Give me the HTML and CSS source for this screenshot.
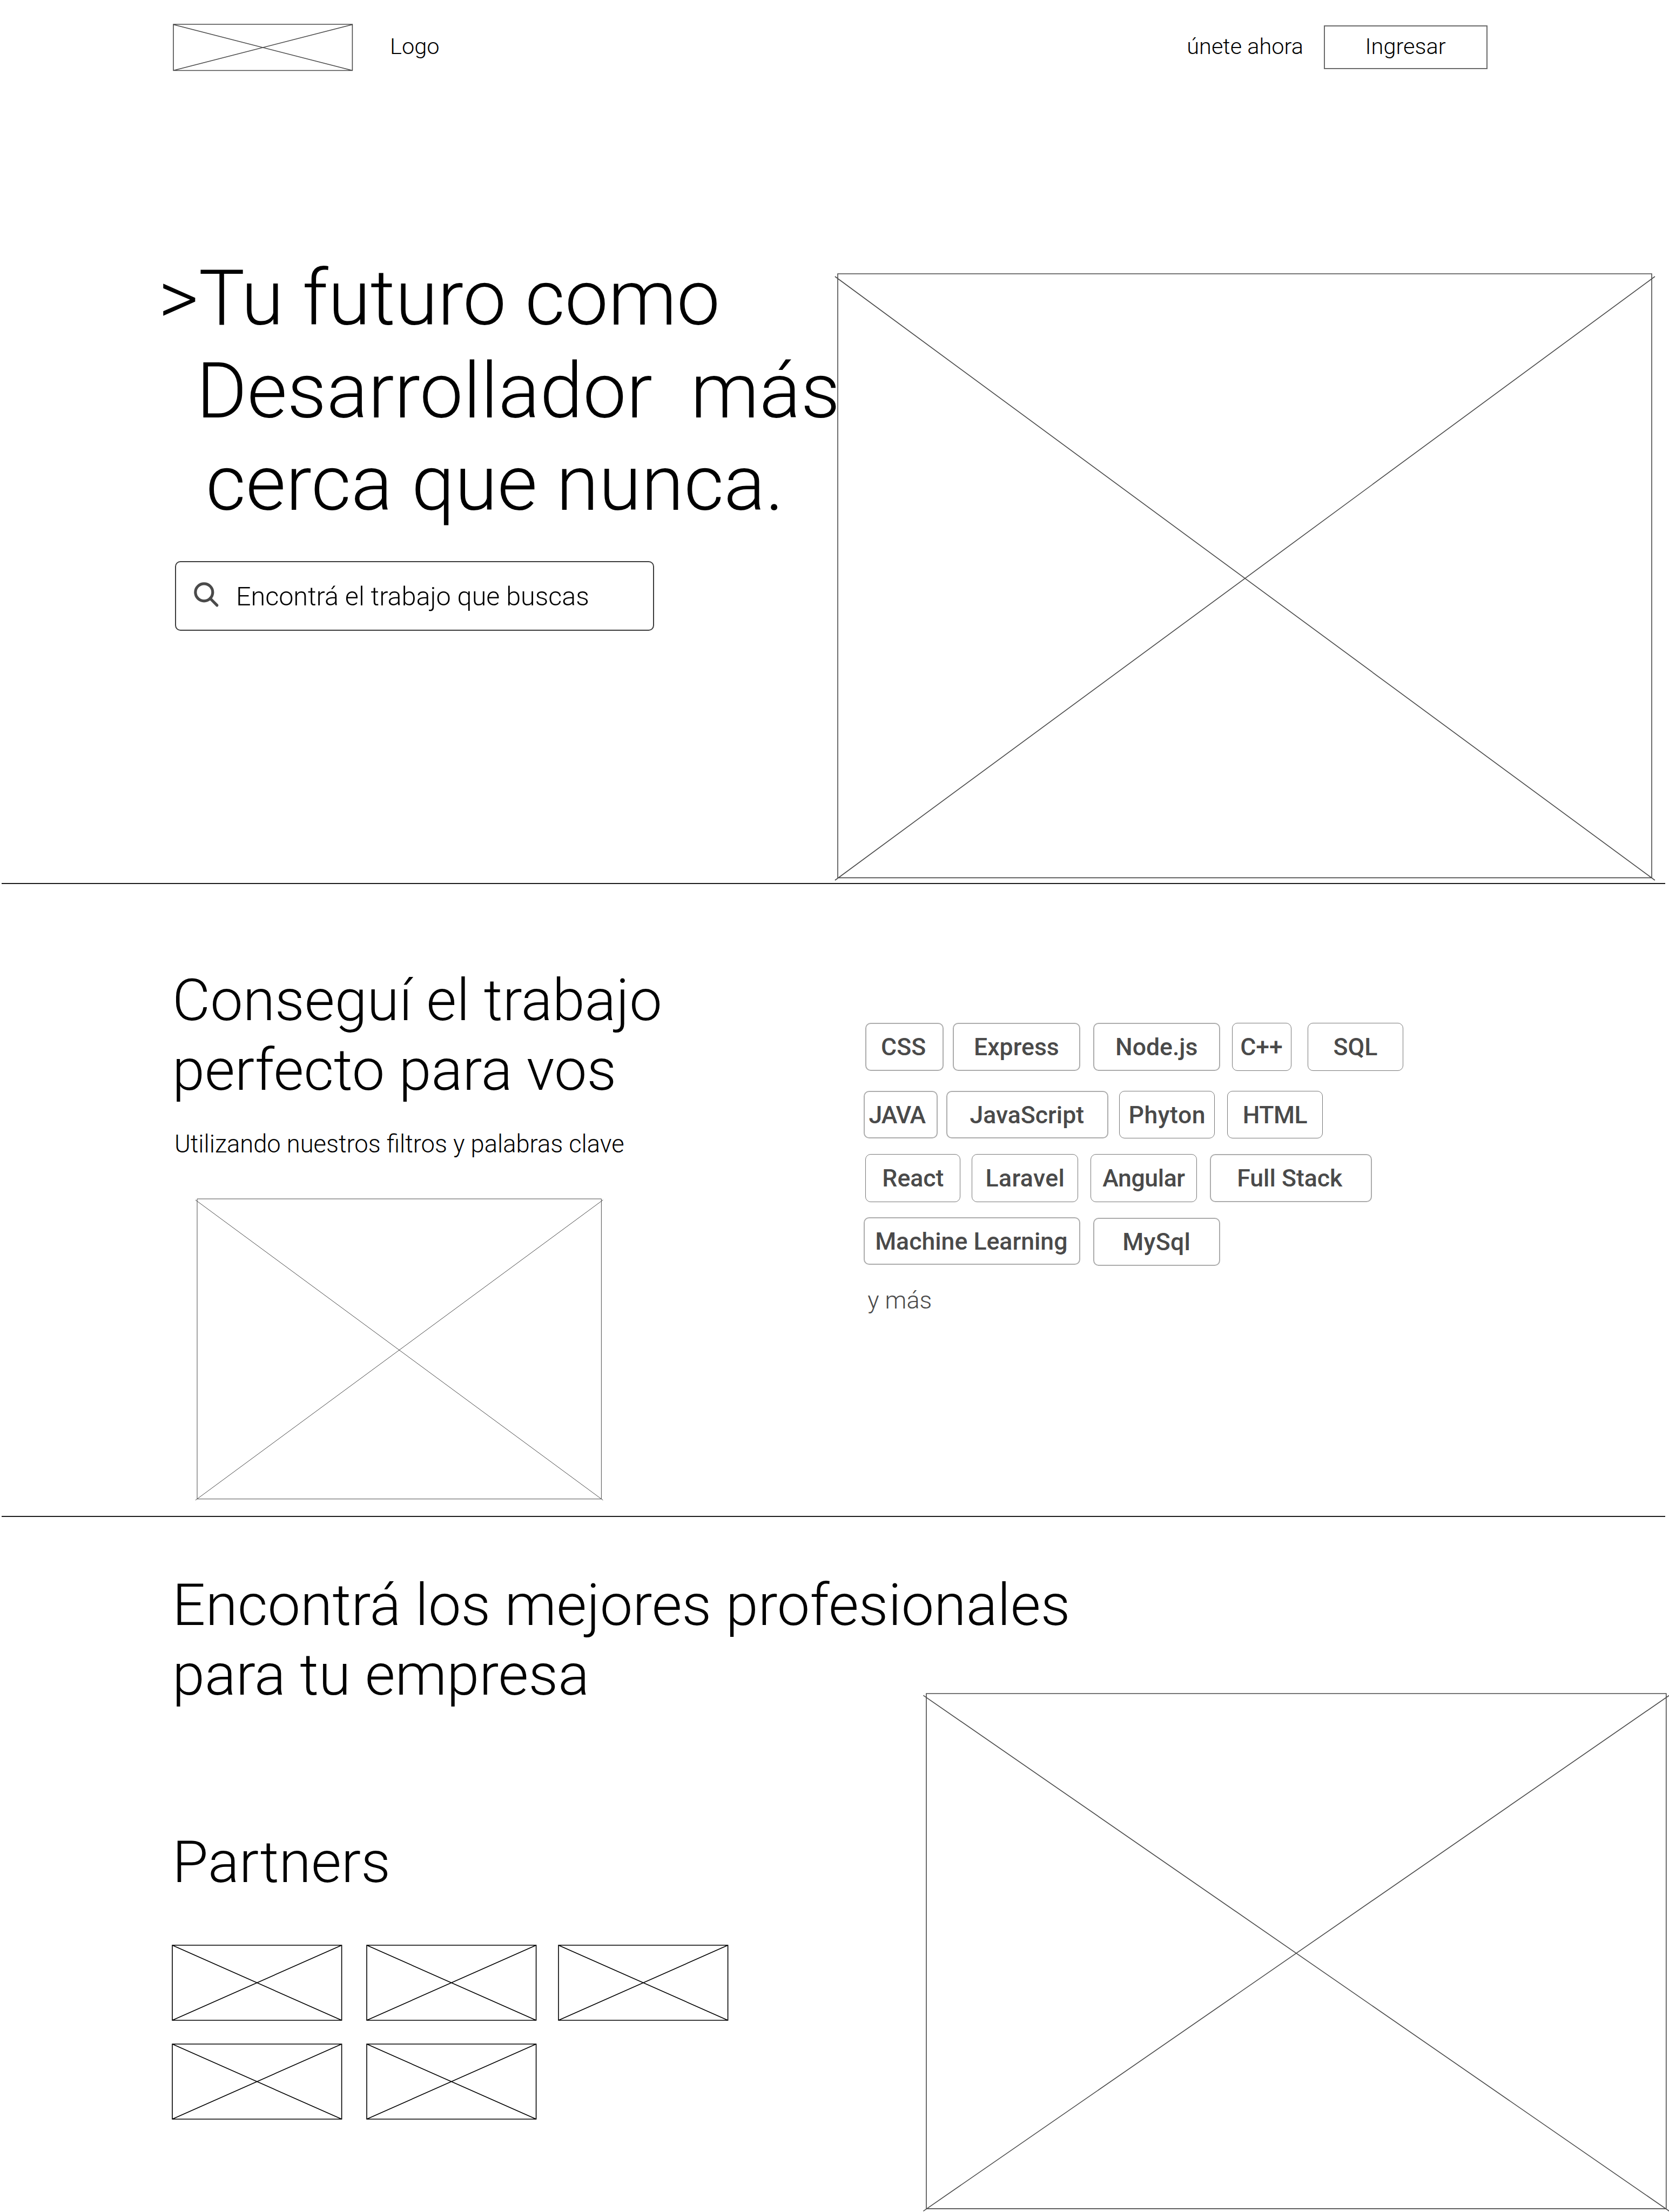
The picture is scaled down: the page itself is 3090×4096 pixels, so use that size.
FILE: index.html
```html
<!DOCTYPE html>
<html lang="es">
<head>
<meta charset="utf-8">
<title>Logo</title>
<link rel="stylesheet" href="styles.css">
</head>
<body>
<header class="header">
  <svg class="logo-frame" viewBox="0 0 331.4 85.5"><path d="M0 0H331.4V85.5H0ZM0 .5L331.4 85.5M331.4 .5L0 85.5"/></svg>
  <span class="logo-name">Logo</span>
  <nav class="nav">
    <a class="nav-link">únete ahora</a>
    <a class="nav-button"><span>Ingresar</span></a>
  </nav>
</header>

<main>
  <section class="hero">
    <div class="hero-copy">
      <h1 class="hero-title">
        <span class="hero-line hero-line-1">&gt;Tu futuro como</span>
        <span class="hero-line hero-line-2">Desarrollador&nbsp; más</span>
        <span class="hero-line hero-line-3">cerca que nunca.</span>
      </h1>
      <div class="search">
        <svg class="search-icon" viewBox="0 0 48 48"><circle cx="20.8" cy="17.8" r="16"/><path d="M32 29L44.8 41.9"/></svg>
        <span class="search-text">Encontrá el trabajo que buscas</span>
      </div>
    </div>
    <svg class="frame hero-image" viewBox="0 0 1507 1118.4"><path d="M0 0H1507V1118.4H0ZM-5.1 5L1512.9 1123M1512.9 5L-5.1 1123"/></svg>
  </section>
  <hr class="divider">

  <section class="jobs">
    <div class="jobs-copy">
      <h2 class="title">Conseguí el trabajo<br>perfecto para vos</h2>
      <p class="subtitle">Utilizando nuestros filtros y palabras clave</p>
      <svg class="frame jobs-image" viewBox="0 0 748.4 555.7"><path d="M0 0H748.4V555.7H0ZM-3.1 2L751.4 557.9M751.4 2L-3.1 557.9"/></svg>
    </div>
    <div class="tags">
      <div class="tag-row tag-row-1">
        <span class="tag tag-css">CSS</span>
        <span class="tag tag-express">Express</span>
        <span class="tag tag-node">Node.js</span>
        <span class="tag tag-thin tag-cpp">C++</span>
        <span class="tag tag-thin tag-sql">SQL</span>
      </div>
      <div class="tag-row tag-row-2">
        <span class="tag tag-java">JAVA</span>
        <span class="tag tag-javascript">JavaScript</span>
        <span class="tag tag-thin tag-phyton">Phyton</span>
        <span class="tag tag-thin tag-html">HTML</span>
      </div>
      <div class="tag-row tag-row-3">
        <span class="tag tag-thin tag-react">React</span>
        <span class="tag tag-thin tag-laravel">Laravel</span>
        <span class="tag tag-thin tag-angular">Angular</span>
        <span class="tag tag-fullstack">Full Stack</span>
      </div>
      <div class="tag-row tag-row-4">
        <span class="tag tag-ml">Machine Learning</span>
        <span class="tag tag-mysql">MySql</span>
      </div>
      <p class="more">y más</p>
    </div>
  </section>
  <hr class="divider">

  <section class="talent">
    <div class="talent-copy">
      <h2 class="title">Encontrá los mejores profesionales<br>para tu empresa</h2>
      <h2 class="title partners-title">Partners</h2>
      <div class="partners">
        <svg class="partner" viewBox="0 0 313.6 139"><path d="M0 0H313.6V139H0ZM0 0L313.6 139M313.6 0L0 139"/></svg>
        <svg class="partner" viewBox="0 0 313.6 139"><path d="M0 0H313.6V139H0ZM0 0L313.6 139M313.6 0L0 139"/></svg>
        <svg class="partner" viewBox="0 0 313.6 139"><path d="M0 0H313.6V139H0ZM0 0L313.6 139M313.6 0L0 139"/></svg>
        <svg class="partner" viewBox="0 0 313.6 139"><path d="M0 0H313.6V139H0ZM0 0L313.6 139M313.6 0L0 139"/></svg>
        <svg class="partner" viewBox="0 0 313.6 139"><path d="M0 0H313.6V139H0ZM0 0L313.6 139M313.6 0L0 139"/></svg>
      </div>
    </div>
    <svg class="frame talent-image" viewBox="0 0 1369.8 953.9"><path d="M0 0H1369.8V953.9H0ZM-5.6 3.4L1375.4 958.3M1375.4 3.4L-5.6 958.3"/></svg>
  </section>
</main>
</body>
</html>
```
FILE: styles.css
```css
* {
  box-sizing: border-box;
}

html {
  overflow: hidden;
}

body {
  margin: 0;
  width: 3090px;
  height: 4096px;
  overflow: hidden;
  background: #fff;
  color: #000;
  font-family: Roboto, "Liberation Sans", sans-serif;
  font-weight: 300;
  white-space: nowrap;
}

h1,
h2,
p {
  margin: 0;
  font-weight: 300;
}

svg {
  display: block;
  flex: none;
  overflow: visible;
  fill: none;
  stroke: #4a4a4a;
  stroke-width: 1.6;
}

.divider {
  height: 2px;
  margin: 0 7px 0 3px;
  border: 0;
  background: #1c1c1c;
}

/* Header */

.header {
  display: flex;
  align-items: center;
  height: 175px;
  padding: 0 336.2px 0 321.4px;
  font-size: 41.5px;
}

.logo-frame {
  width: 331.4px;
  height: 85.5px;
}

.logo-name {
  margin-left: 69.3px;
  padding-bottom: 4px;
}

.nav {
  display: flex;
  align-items: center;
  gap: 37.5px;
  margin-left: auto;
}

.nav-link {
  padding-bottom: 4px;
}

.nav-button {
  display: flex;
  align-items: center;
  justify-content: center;
  width: 303.3px;
  height: 81px;
  padding-bottom: 4px;
  border: 2px solid #6a6a6a;
}

/* Hero */

.hero {
  display: flex;
  height: 1459.6px;
}

.hero-copy {
  width: 1550.8px;
  padding-top: 292.1px;
}

.hero-title {
  font-size: 143.2px;
  line-height: 171.6px;
}

.hero-line {
  display: block;
}

.hero-line-1 {
  padding-left: 293.6px;
  letter-spacing: -0.1px;
}

.hero-line-2 {
  padding-left: 363.4px;
  letter-spacing: 0.24px;
}

.hero-line-3 {
  padding-left: 381px;
  letter-spacing: 0.1px;
}

.search {
  display: flex;
  align-items: center;
  width: 887px;
  height: 129.4px;
  margin: 56.9px 0 0 324.2px;
  padding-left: 30.8px;
  border: 2px solid #3c3c3c;
  border-radius: 10px;
  font-size: 48.5px;
}

.search-icon {
  width: 48px;
  height: 48px;
  margin-right: 31.9px;
  stroke-width: 5.2;
  stroke-linecap: round;
}

.search-text {
  padding-top: 3px;
}

.hero-image {
  width: 1507px;
  height: 1118.4px;
  margin-top: 331.8px;
}

/* Jobs */

.title {
  padding-left: 319px;
  font-size: 108px;
  line-height: 129.6px;
}

.jobs {
  display: flex;
  height: 1170.4px;
}

.jobs-copy {
  width: 1599.3px;
  padding-top: 151px;
}

.subtitle {
  margin-top: 44.9px;
  padding-left: 323px;
  font-size: 45.3px;
  line-height: 54px;
}

.jobs-image {
  width: 748.4px;
  height: 555.7px;
  margin: 73.9px 0 0 364.8px;
  stroke-width: 1;
}

.tags {
  padding-top: 257.9px;
  color: #4a4a4a;
}

.tag-row {
  display: flex;
  align-items: flex-start;
  height: 88.5px;
}

.tag-row-1 {
  padding-left: 2.3px;
}

.tag-row-2 {
  margin-top: 36.9px;
}

.tag-row-3 {
  margin-top: 28.7px;
  padding-left: 2.7px;
}

.tag-row-4 {
  margin-top: 28.3px;
}

.tag {
  display: flex;
  flex: none;
  align-items: center;
  justify-content: center;
  height: 88.5px;
  padding-top: 1px;
  border: 2px solid #acacac;
  border-radius: 10px;
  font-size: 44.6px;
  font-weight: 500;
}

.tag-thin {
  border: 1px solid #787878;
}

.tag-css {
  width: 145px;
  padding-right: 3px;
}

.tag-express {
  width: 235.4px;
  margin-left: 17.6px;
}

.tag-node {
  width: 235.4px;
  margin-left: 24px;
}

.tag-cpp {
  width: 110px;
  margin-left: 21.6px;
}

.tag-sql {
  width: 176.5px;
  margin-left: 30.5px;
}

.tag-java {
  width: 136.6px;
  padding-right: 13.6px;
  letter-spacing: -1px;
}

.tag-javascript {
  width: 300px;
  margin-left: 16.4px;
  padding-right: 2px;
}

.tag-phyton {
  width: 177px;
  margin-left: 20px;
  letter-spacing: 0.5px;
}

.tag-html {
  width: 177px;
  margin-left: 22.7px;
  letter-spacing: -0.5px;
}

.tag-react {
  width: 176px;
  margin-left: 0.4px;
}

.tag-laravel {
  width: 197px;
  margin-left: 21px;
  letter-spacing: 0.4px;
}

.tag-angular {
  width: 197px;
  margin-left: 22.6px;
  letter-spacing: -0.4px;
}

.tag-fullstack {
  width: 300px;
  margin-left: 23.8px;
  padding-right: 4px;
}

.tag-ml {
  width: 401px;
  padding-right: 3px;
}

.tag-mysql {
  width: 235.4px;
  margin: 1.6px 0 0 23.3px;
  letter-spacing: 0.3px;
}

.more {
  margin-top: 38.5px;
  padding-left: 7px;
  font-size: 44.9px;
  line-height: 54px;
}

/* Talent and partners */

.talent {
  display: flex;
  height: 1287px;
}

.talent-copy {
  width: 1714.6px;
  padding-top: 98.6px;
}

.partners-title {
  margin-top: 217.4px;
}

.partners {
  display: grid;
  grid-template-columns: 360.3px 354.4px 313.6px;
  row-gap: 43.4px;
  margin: 88.7px 0 0 319px;
}

.partner {
  width: 313.6px;
  height: 139px;
  stroke: #000;
}

.talent-image {
  width: 1369.8px;
  height: 953.9px;
  margin-top: 327.5px;
}
```
